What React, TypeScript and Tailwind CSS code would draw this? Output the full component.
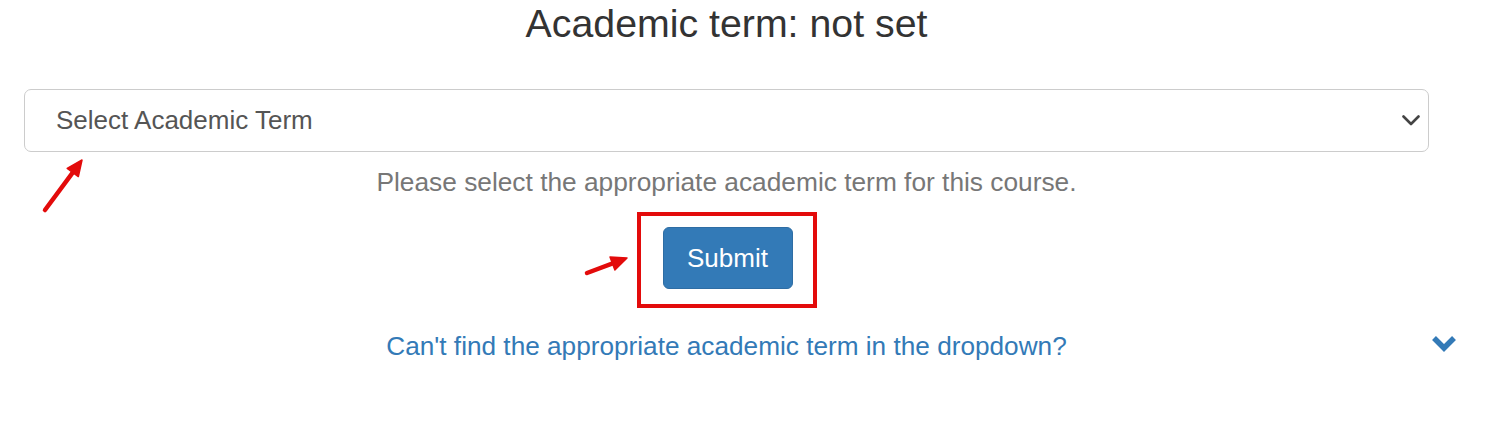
import React from "react";

function Arrow({ x1, y1, x2, y2 }: { x1: number; y1: number; x2: number; y2: number }) {
  const ang = Math.atan2(y2 - y1, x2 - x1);
  const len = 17;
  const spread = 0.42;
  const ax = x2 - len * Math.cos(ang - spread);
  const ay = y2 - len * Math.sin(ang - spread);
  const bx = x2 - len * Math.cos(ang + spread);
  const by = y2 - len * Math.sin(ang + spread);
  return (
    <g>
      <line x1={x1} y1={y1} x2={x2 - 6 * Math.cos(ang)} y2={y2 - 6 * Math.sin(ang)} stroke="#e30b0b" strokeWidth={4.5} strokeLinecap="round" />
      <polygon points={`${x2},${y2} ${ax},${ay} ${bx},${by}`} fill="#e30b0b" stroke="#e30b0b" strokeWidth={1.5} strokeLinejoin="round" />
    </g>
  );
}

export default function App() {
  return (
    <div
      className="relative w-[1487px] h-[431px] bg-white overflow-hidden"
      style={{ fontFamily: '"Liberation Sans", Arial, sans-serif' }}
    >
      <div className="ml-[24px] w-[1405px] flex flex-col items-center">
        <h1 className="text-[39.3px] leading-[46px] text-[#333333] font-normal">Academic term: not set</h1>

        <div className="mt-[43px] w-full h-[63px] border border-[#cccccc] rounded-[7px] flex items-center justify-between pl-[31px] pr-[8px]">
          <span className="text-[26px] text-[#555555]">Select Academic Term</span>
          <svg width="18" height="11" viewBox="0 0 18 11">
            <path d="M1.5 1.5 L9 9 L16.5 1.5" fill="none" stroke="#444" strokeWidth="2.6" strokeLinecap="round" strokeLinejoin="round" />
          </svg>
        </div>

        <p className="mt-[12px] text-[26.3px] leading-[36px] text-[#777777]">
          Please select the appropriate academic term for this course.
        </p>

        <div className="mt-[12px] border-4 border-[#e30b0b] pt-[11px] pb-[15px] pl-[22px] pr-[20px]">
          <button className="w-[130px] h-[62px] bg-[#337ab7] border border-[#2e6da4] rounded-[6px] text-white text-[26px] flex items-center justify-center">
            Submit
          </button>
        </div>

        <div className="relative w-full mt-[20px] flex justify-center">
          <a className="text-[26.2px] leading-[36px] text-[#337ab7]">
            Can't find the appropriate academic term in the dropdown?
          </a>
        </div>
      </div>

      <svg className="absolute left-[1431px] top-[334px]" width="26" height="19" viewBox="0 0 26 19">
        <path d="M3 4 L13 14 L23 4" fill="none" stroke="#337ab7" strokeWidth="5.5" strokeLinecap="butt" strokeLinejoin="miter" />
      </svg>

      <svg className="absolute left-0 top-0 pointer-events-none" width="1487" height="431">
        <Arrow x1={45} y1={210} x2={82} y2={160} />
        <Arrow x1={587} y1={273} x2={627} y2={258} />
      </svg>
    </div>
  );
}
